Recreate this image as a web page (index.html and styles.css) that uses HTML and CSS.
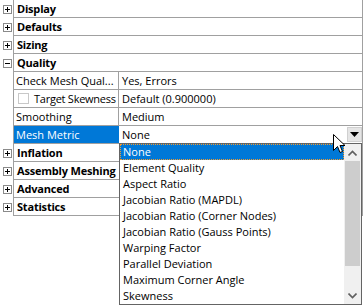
FILE: index.html
```html
<!DOCTYPE html>
<html>
<head>
<meta charset="utf-8">
<link rel="stylesheet" href="styles.css">
</head>
<body>
<div class="pg">
  <div class="row cat"><span class="gut"><span class="exp plus"></span></span><div class="body"><div class="catname">Display</div></div></div>
  <div class="row cat"><span class="gut"><span class="exp plus"></span></span><div class="body"><div class="catname">Defaults</div></div></div>
  <div class="row cat"><span class="gut"><span class="exp plus"></span></span><div class="body"><div class="catname">Sizing</div></div></div>
  <div class="row cat"><span class="gut"><span class="exp minus"></span></span><div class="body"><div class="catname">Quality</div></div></div>
  <div class="row"><span class="gut"></span><div class="body"><div class="name">Check Mesh Qual...</div><div class="val">Yes, Errors</div></div></div>
  <div class="row"><span class="gut"></span><div class="body"><div class="name"><span class="chk"></span><span class="tight">Target Skewness</span></div><div class="val">Default (0.900000)</div></div></div>
  <div class="row"><span class="gut"></span><div class="body"><div class="name">Smoothing</div><div class="val">Medium</div></div></div>
  <div class="row"><span class="gut"></span><div class="body"><div class="name sel">Mesh Metric</div><div class="val">None<span class="ddbtn"><svg width="9" height="5" viewBox="0 0 9 5"><path d="M0 0H9L4.5 5Z" fill="#000"/></svg></span></div></div></div>
  <div class="row cat"><span class="gut"><span class="exp plus"></span></span><div class="body"><div class="catname">Inflation</div></div></div>
  <div class="row cat"><span class="gut"><span class="exp plus"></span></span><div class="body"><div class="catname">Assembly Meshing</div></div></div>
  <div class="row cat"><span class="gut"><span class="exp plus"></span></span><div class="body"><div class="catname">Advanced</div></div></div>
  <div class="row cat"><span class="gut"><span class="exp plus"></span></span><div class="body"><div class="catname">Statistics</div></div></div>
</div>

<div class="dropdown">
  <ul class="items">
    <li class="on">None</li>
    <li>Element Quality</li>
    <li>Aspect Ratio</li>
    <li>Jacobian Ratio (MAPDL)</li>
    <li>Jacobian Ratio (Corner Nodes)</li>
    <li>Jacobian Ratio (Gauss Points)</li>
    <li>Warping Factor</li>
    <li>Parallel Deviation</li>
    <li>Maximum Corner Angle</li>
    <li>Skewness</li>
  </ul>
  <div class="sb">
    <div class="arrow"><svg width="9" height="6" viewBox="0 0 9 6"><path d="M0.5 5.5L4.5 1.5L8.5 5.5" fill="none" stroke="#606060" stroke-width="1.6"/></svg></div>
    <div class="track"><div class="thumb"></div></div>
    <div class="arrow"><svg width="9" height="6" viewBox="0 0 9 6"><path d="M0.5 0.5L4.5 4.5L8.5 0.5" fill="none" stroke="#606060" stroke-width="1.6"/></svg></div>
  </div>
</div>

<svg class="cursor" width="13" height="20" viewBox="0 0 13 20"><path d="M0.5 0.5V16.5L4.5 12.5L7 18.5L9.5 17.5L7 11.5H12Z" fill="#fff" stroke="#000" stroke-width="1" stroke-linejoin="miter"/></svg>
</body>
</html>
```

FILE: styles.css
```css
html, body {
  margin: 0;
  padding: 0;
  background: #fff;
}
body {
  font-family: "Open Sans", "Noto Sans", sans-serif;
  font-size: 11px;
  color: #000;
  width: 363px;
  height: 308px;
  overflow: hidden;
  position: relative;
}
.pg {
  width: 363px;
}
.row {
  display: flex;
  height: 18px;
}
.gut {
  width: 13px;
  flex: none;
  display: flex;
  align-items: center;
  justify-content: flex-start;
}
.exp {
  width: 9px;
  height: 9px;
  box-sizing: border-box;
  border: 1px solid #8a8a8a;
  margin-left: 3px;
  position: relative;
  background: #fff;
}
.exp::before {
  content: "";
  position: absolute;
  left: 1px;
  top: 3px;
  width: 5px;
  height: 1px;
  background: #000;
}
.plus::after {
  content: "";
  position: absolute;
  left: 3px;
  top: 1px;
  width: 1px;
  height: 5px;
  background: #000;
}
.body {
  flex: 1;
  display: flex;
  border-left: 1px solid #a0a0a0;
  border-right: 1px solid #a0a0a0;
  border-bottom: 1px solid #a0a0a0;
  height: 17px;
}
.catname {
  font-weight: 700;
  padding-left: 3px;
  line-height: 17px;
  white-space: nowrap;
  letter-spacing: -0.2px;
}
.name {
  width: 105px;
  flex: none;
  border-right: 1px solid #a0a0a0;
  padding-left: 2px;
  box-sizing: border-box;
  line-height: 17px;
  white-space: nowrap;
  overflow: hidden;
  display: flex;
  align-items: center;
}
.name.sel {
  background: #0078d7;
  color: #fff;
  border-right-color: #0078d7;
}
.chk {
  width: 11px;
  height: 11px;
  box-sizing: border-box;
  border: 1px solid #c8c8c8;
  margin: 0 5px 0 2px;
  flex: none;
}
.tight {
  letter-spacing: -0.25px;
}
.val {
  flex: 1;
  padding-left: 3px;
  line-height: 17px;
  white-space: nowrap;
  display: flex;
  align-items: center;
}
.ddbtn {
  margin-left: auto;
  margin-right: 0;
  width: 15px;
  height: 15px;
  background: #e5e5e5;
  border: 1px solid #d0d0d0;
  box-sizing: border-box;
  display: flex;
  align-items: center;
  justify-content: center;
}
.dropdown {
  position: absolute;
  left: 119px;
  top: 143px;
  width: 243px;
  height: 162px;
  box-sizing: border-box;
  border: 1px solid #646464;
  background: #fff;
  display: flex;
}
.items {
  list-style: none;
  margin: 0;
  padding: 0;
  flex: 1;
}
.items li {
  height: 16px;
  line-height: 16px;
  padding-left: 3px;
  white-space: nowrap;
  overflow: hidden;
  box-sizing: border-box;
}
.items li.on {
  background: #0078d7;
  color: #fff;
  border: 1px dotted #f39a2b;
  padding-left: 2px;
  line-height: 14px;
}
.sb {
  width: 17px;
  flex: none;
  background: #f0f0f0;
  display: flex;
  flex-direction: column;
}
.arrow {
  height: 17px;
  display: flex;
  align-items: center;
  justify-content: center;
}
.track {
  flex: 1;
  padding: 0 1px;
}
.thumb {
  height: 105px;
  background: #cdcdcd;
}
.cursor {
  position: absolute;
  left: 333px;
  top: 134px;
}
```
